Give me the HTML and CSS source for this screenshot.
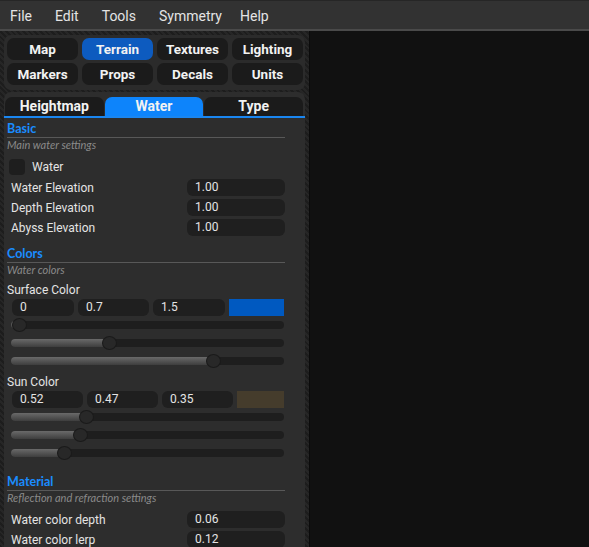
FILE: index.html
```html
<!DOCTYPE html>
<html lang="en">
    <head>
        <meta charset="UTF-8">
        <meta name="viewport" content="width=device-width, initial-scale=1.0">
        <title>Map Editor</title>
        <link rel="stylesheet" href="styles.css">
    </head>
    <body>
        <div class="menubar">
            <span class="menu-item">File</span>
            <span class="menu-item">Edit</span>
            <span class="menu-item">Tools</span>
            <span class="menu-item">Symmetry</span>
            <span class="menu-item">Help</span>
        </div>

        <div class="workspace">
            <div class="sidebar">
                <!-- 工具按钮 -->
                <div class="tools">
                    <div class="tool">Map</div>
                    <div class="tool active">Terrain</div>
                    <div class="tool">Textures</div>
                    <div class="tool">Lighting</div>
                    <div class="tool">Markers</div>
                    <div class="tool">Props</div>
                    <div class="tool">Decals</div>
                    <div class="tool">Units</div>
                </div>

                <div class="panel">
                    <div class="tabs">
                        <div class="tab">Heightmap</div>
                        <div class="tab active">Water</div>
                        <div class="tab">Type</div>
                    </div>

                    <div class="content">
                        <div class="section-title">Basic</div>
                        <div class="section-sub">Main water settings</div>
                        <div class="check">
                            <span class="box"></span>
                            <span>Water</span>
                        </div>
                        <div class="fields">
                            <div class="field">
                                <span class="label">Water Elevation</span>
                                <span class="num">1.00</span>
                            </div>
                            <div class="field">
                                <span class="label">Depth Elevation</span>
                                <span class="num">1.00</span>
                            </div>
                            <div class="field">
                                <span class="label">Abyss Elevation</span>
                                <span class="num">1.00</span>
                            </div>
                        </div>

                        <div class="section-title gap">Colors</div>
                        <div class="section-sub">Water colors</div>

                        <div class="color-label first">Surface Color</div>
                        <div class="color-row surface">
                            <span class="num">0</span>
                            <span class="num">0.7</span>
                            <span class="num">1.5</span>
                            <span class="swatch surface-swatch"></span>
                        </div>
                        <div class="slider"><div class="track"><div class="fill" style="--v: 0"></div><div class="thumb" style="--v: 0"></div></div></div>
                        <div class="slider"><div class="track"><div class="fill" style="--v: 0.35"></div><div class="thumb" style="--v: 0.35"></div></div></div>
                        <div class="slider"><div class="track"><div class="fill" style="--v: 0.75"></div><div class="thumb" style="--v: 0.75"></div></div></div>

                        <div class="color-label">Sun Color</div>
                        <div class="color-row sun">
                            <span class="num">0.52</span>
                            <span class="num">0.47</span>
                            <span class="num">0.35</span>
                            <span class="swatch sun-swatch"></span>
                        </div>
                        <div class="slider"><div class="track"><div class="fill" style="--v: 0.26"></div><div class="thumb" style="--v: 0.26"></div></div></div>
                        <div class="slider"><div class="track"><div class="fill" style="--v: 0.235"></div><div class="thumb" style="--v: 0.235"></div></div></div>
                        <div class="slider"><div class="track"><div class="fill" style="--v: 0.175"></div><div class="thumb" style="--v: 0.175"></div></div></div>

                        <div class="section-title gap-lg">Material</div>
                        <div class="section-sub">Reflection and refraction settings</div>
                        <div class="fields material">
                            <div class="field">
                                <span class="label">Water color depth</span>
                                <span class="num">0.06</span>
                            </div>
                            <div class="field">
                                <span class="label">Water color lerp</span>
                                <span class="num">0.12</span>
                            </div>
                        </div>
                    </div>
                </div>
            </div>

            <div class="viewport"></div>
        </div>
    </body>
</html>
```

FILE: styles.css
```css
* {
    margin: 0;
    padding: 0;
    box-sizing: border-box;
}

body {
    width: 589px;
    height: 547px;
    overflow: hidden;
    background-color: #111;
    color: #e4e4e4;
    font-family: Roboto, "Liberation Sans", sans-serif;
}

/* 菜单栏 */
.menubar {
    display: flex;
    align-items: center;
    gap: 23px;
    height: 31px;
    padding: 2px 0 0 10px;
    background-color: #323232;
    border-top: 1px solid #262626;
    border-bottom: 2px solid #4a4a4a;
    font-size: 14px;
    color: #e4e4e4;
}

.menu-item:last-child {
    margin-left: -5px;
}

.workspace {
    display: flex;
    height: calc(100% - 31px);
}

.sidebar {
    width: 310px;
    padding: 4px 4px 0 4px;
    background: repeating-linear-gradient(45deg, #1d1d1d 0 2px, #262626 2px 4px);
    border-right: 1px solid #0b0b0b;
    overflow: hidden;
}

.viewport {
    flex: 1;
    background-color: #111;
}

/* 工具按钮 */
.tools {
    display: grid;
    grid-template-columns: repeat(4, 71px);
    gap: 3px 4px;
    padding: 3px 3px 5px;
    background-color: #2b2b2b;
    border-radius: 7px;
}

.tool {
    height: 22px;
    line-height: 22px;
    text-align: center;
    border-radius: 7px;
    background-color: #1b1b1b;
    font-size: 13.5px;
    font-weight: 700;
    color: #f2f2f2;
}

.tool.active {
    background-color: #0d5bbf;
}

.panel {
    margin-top: 2px;
    height: 500px;
    background-color: #2d2d2d;
    border-radius: 7px 7px 0 0;
}

.tabs {
    display: flex;
    padding: 5px 2px 0 1px;
    border-bottom: 2px solid #1a86f0;
}

.tab {
    flex: 1;
    height: 19px;
    line-height: 19px;
    text-align: center;
    border-radius: 7px 7px 0 0;
    background-color: #1b1b1b;
    font-size: 14px;
    font-weight: 700;
    color: #f2f2f2;
}

.tab + .tab {
    margin-left: 1px;
}

.tab.active {
    background-color: #0d84fb;
}

.content {
    padding: 3px 20px 0 3px;
}

.section-title {
    height: 17px;
    line-height: 16px;
    border-bottom: 1px solid #585858;
    font: 700 12.5px Lato, "Liberation Sans", sans-serif;
    color: #1a8cff;
}

.section-title.gap {
    margin-top: 10px;
}

.section-title.gap-lg {
    margin-top: 12px;
}

.section-sub {
    height: 14px;
    line-height: 14px;
    font: italic 11px Lato, "Liberation Sans", sans-serif;
    color: #8a8a8a;
}

.check {
    display: flex;
    align-items: center;
    gap: 7px;
    height: 16px;
    margin: 7px 0 0 2px;
    font-size: 12px;
}

.box {
    width: 16px;
    height: 16px;
    border-radius: 4px;
    background-color: #1e1e1e;
}

.fields {
    display: flex;
    flex-direction: column;
    gap: 3px;
    margin-top: 4px;
}

.fields.material {
    margin-top: 6px;
}

.field {
    display: grid;
    grid-template-columns: 1fr 98px;
    align-items: center;
    height: 17px;
    padding-left: 4px;
    font-size: 12px;
}

.num {
    display: block;
    height: 17px;
    line-height: 17px;
    padding-left: 8px;
    border-radius: 6px;
    background-color: #1f1f1f;
    font-size: 12px;
    color: #e4e4e4;
}

/* 颜色 */
.color-label {
    height: 14px;
    line-height: 14px;
    margin-top: 5px;
    font-size: 12px;
}

.color-label.first {
    margin-top: 6px;
}

.color-row {
    display: grid;
    gap: 4px;
    margin: 2px 1px 0 5px;
}

.color-row.surface {
    grid-template-columns: 62px 71px 72px 1fr;
}

.color-row.sun {
    grid-template-columns: 71px 71px 71px 1fr;
}

.swatch {
    height: 17px;
}

.surface-swatch {
    background-color: #0059c0;
}

.sun-swatch {
    background-color: #453c2c;
}

.slider {
    display: flex;
    align-items: center;
    height: 18px;
    padding: 0 1px 0 4px;
}

.track {
    position: relative;
    flex: 1;
    height: 8px;
    border-radius: 4px;
    background-color: #1e1e1e;
}

.fill {
    position: absolute;
    left: 0;
    top: 0;
    bottom: 0;
    width: calc(var(--v) * (100% - 15px) + 8px);
    border-radius: 4px 0 0 4px;
    background-image: linear-gradient(#6a6a6a, #3e3e3e);
}

.thumb {
    position: absolute;
    top: -3px;
    left: calc(var(--v) * (100% - 15px) + 1px);
    width: 15px;
    height: 14px;
    border-radius: 50%;
    background-color: #282828;
    border: 1px solid #1a1a1a;
}
```
